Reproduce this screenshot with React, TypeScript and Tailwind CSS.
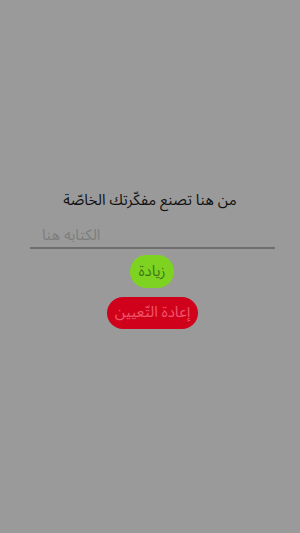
import { useState } from "react";

export default function App() {
  const [value, setValue] = useState("");

  return (
    <div
      dir="rtl"
      className="h-[533px] w-[300px] bg-[#9a9a9a] flex flex-col items-center pt-[186px] font-['Noto_Sans_Arabic','DejaVu_Sans',sans-serif]"
    >
      <p className="text-[15px] leading-[28px] text-[#111]">من هنا تصنع مفكّرتك الخاصّة</p>

      <div className="self-stretch ml-[30px] mr-[25px] border-b-2 border-[#6e6e6e]">
        <input
          dir="rtl"
          value={value}
          onChange={(e) => setValue(e.target.value)}
          placeholder="الكتابه هنا"
          className="w-full h-[28px] pt-[13px] pb-0 leading-[15px] bg-transparent text-left text-[15px] px-3 outline-none text-[#222] placeholder:text-[#7d7d7d]"
        />
      </div>

      <button
        type="button"
        className="mt-[6px] ml-[4px] h-[33px] px-[8px] rounded-full bg-[#7ed321] text-[15px] text-[#3d7a12]"
      >
        زيادة
      </button>

      <button
        type="button"
        onClick={() => setValue("")}
        className="mt-[9px] ml-[5px] h-[32px] px-[8px] rounded-full bg-[#d0021b] text-[15px] text-[#f0566a]"
      >
        إعادة التّعيين
      </button>
    </div>
  );
}
